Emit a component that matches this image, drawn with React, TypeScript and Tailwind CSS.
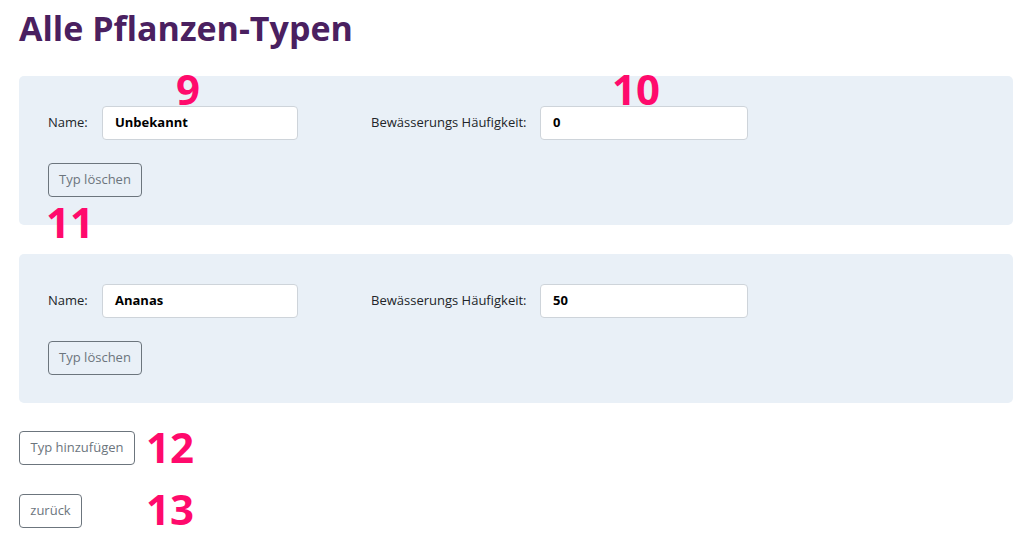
import React from "react";

const font = { fontFamily: '"Open Sans", "Noto Sans", sans-serif' };

function Ann({ n, className }: { n: string; className: string }) {
  return (
    <span
      className={`absolute text-[42px] font-bold leading-none text-[#ff0a6c] ${className}`}
    >
      {n}
    </span>
  );
}

function Panel({ name, freq, annotated }: { name: string; freq: string; annotated?: boolean }) {
  return (
    <div className="relative rounded-[5px] bg-[#e9f0f7] pl-[29px] pt-[30px] pb-[28px]">
      {annotated && (
        <>
          <Ann n="9" className="left-[157px] top-[-8px]" />
          <Ann n="10" className="left-[593px] top-[-8px]" />
          <Ann n="11" className="left-[27px] top-[125px]" />
        </>
      )}
      <div className="flex items-center">
        <label className="w-[54px] text-[13px] text-[#212529]">Name:</label>
        <div className="flex h-[34px] w-[196px] items-center rounded-[4px] border border-[#ced4da] bg-white pl-[12px] text-[13px] font-bold text-black">
          {name}
        </div>
        <label className="ml-[73px] w-[169px] text-[13px] text-[#212529]">Bewässerungs Häufigkeit:</label>
        <div className="flex h-[34px] w-[208px] items-center rounded-[4px] border border-[#ced4da] bg-white pl-[12px] text-[13px] font-bold text-black">
          {freq}
        </div>
      </div>
      <button className="mt-[23px] flex h-[34px] w-[94px] items-center justify-center rounded-[4px] border border-[#6c757d] text-[13px] text-[#6c757d]">
        Typ löschen
      </button>
    </div>
  );
}

export default function App() {
  return (
    <div className="min-h-[540px] bg-white px-[19px] pt-[6px]" style={font}>
      <h1 className="h-[70px] text-[34px] font-bold leading-[44px] text-[#4a2060]">Alle Pflanzen-Typen</h1>
      <div className="flex w-[994px] flex-col gap-[29px]">
        <Panel name="Unbekannt" freq="0" annotated />
        <Panel name="Ananas" freq="50" />
      </div>
      <div className="relative mt-[28px] flex items-center">
        <button className="flex h-[34px] w-[116px] items-center justify-center rounded-[4px] border border-[#6c757d] text-[13px] text-[#6c757d]">
          Typ hinzufügen
        </button>
        <Ann n="12" className="left-[127px] top-[-5px]" />
      </div>
      <div className="relative mt-[29px] flex items-center">
        <button className="flex h-[34px] w-[63px] items-center justify-center rounded-[4px] border border-[#6c757d] text-[13px] text-[#6c757d]">
          zurück
        </button>
        <Ann n="13" className="left-[127px] top-[-6px]" />
      </div>
    </div>
  );
}
